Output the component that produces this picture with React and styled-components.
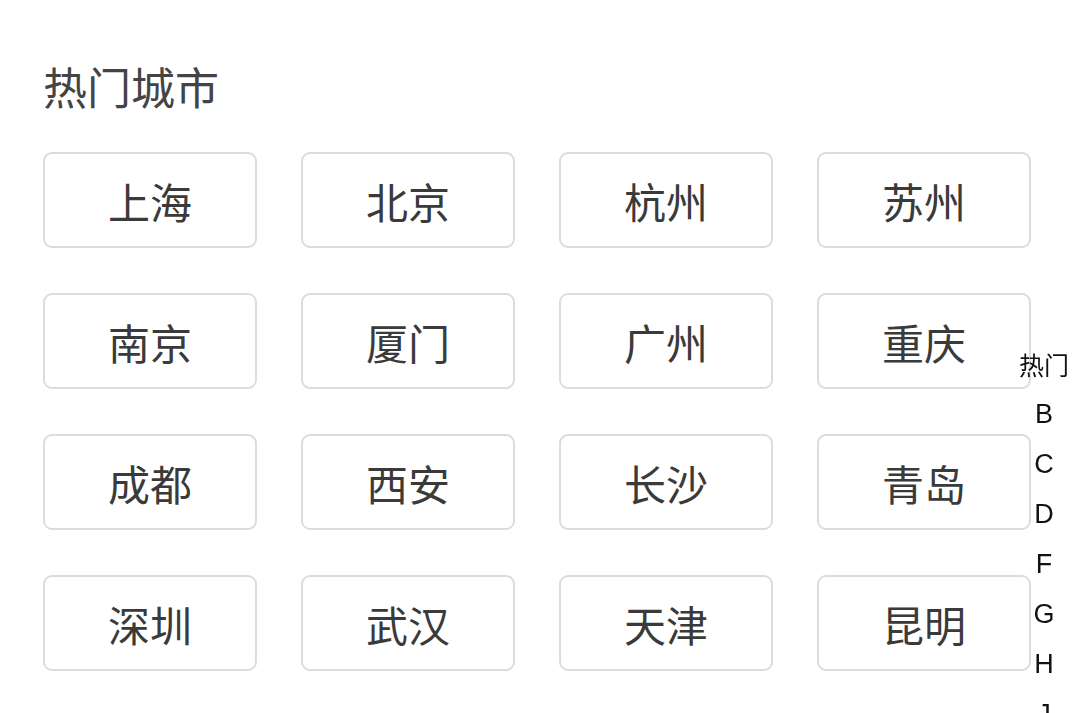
import styled, { createGlobalStyle } from "styled-components";

const GlobalStyle = createGlobalStyle`
  html, body {
    margin: 0;
    padding: 0;
    background: #fff;
    font-family: "Noto Sans CJK SC", "Noto Sans", sans-serif;
  }
`;

const Page = styled.div`
  padding: 50px 0 0 43px;
`;

const Title = styled.h2`
  margin: 0 0 30px;
  font-size: 44px;
  font-weight: 400;
  line-height: 72px;
  color: #444;
`;

const Grid = styled.div`
  display: grid;
  grid-template-columns: repeat(4, 214px);
  column-gap: 44px;
  row-gap: 45px;
`;

const CityButton = styled.div`
  box-sizing: border-box;
  height: 96px;
  display: flex;
  align-items: center;
  justify-content: center;
  border: 2px solid #dcdcdc;
  border-radius: 9px;
  font-size: 42px;
  color: #3a3a3a;
`;

const IndexBar = styled.ul`
  position: fixed;
  top: 339px;
  right: 2px;
  width: 52px;
  margin: 0;
  padding: 0;
  list-style: none;
`;

const IndexItem = styled.li`
  height: 50px;
  line-height: 50px;
  text-align: center;
  font-family: ${(p) =>
    p.$cjk ? '"Noto Sans CJK SC", sans-serif' : '"Liberation Sans", Arial, sans-serif'};
  font-size: ${(p) => (p.$cjk ? "25px" : "27px")};
  color: #111;
`;

const cities = [
  "上海", "北京", "杭州", "苏州",
  "南京", "厦门", "广州", "重庆",
  "成都", "西安", "长沙", "青岛",
  "深圳", "武汉", "天津", "昆明",
];

const letters = ["热门", "B", "C", "D", "F", "G", "H", "J", "K", "L", "M", "N"];

const App = () => (
  <>
    <GlobalStyle />
    <Page>
      <Title>热门城市</Title>
      <Grid>
        {cities.map((c) => (
          <CityButton key={c}>{c}</CityButton>
        ))}
      </Grid>
    </Page>
    <IndexBar>
      {letters.map((l) => (
        <IndexItem key={l} $cjk={l === "热门"}>
          {l}
        </IndexItem>
      ))}
    </IndexBar>
  </>
);

export default App;
